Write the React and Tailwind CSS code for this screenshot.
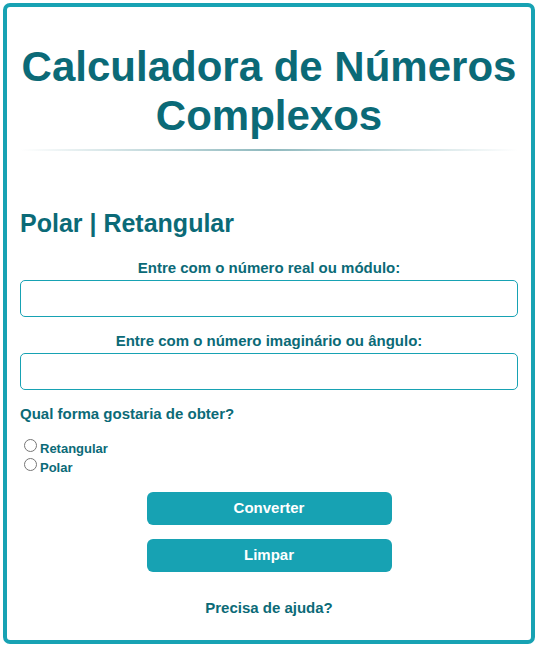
import { useState } from "react";

// Calculadora de números complexos (polar <-> retangular)
const App = () => {
  const [real, setReal] = useState("");
  const [imag, setImag] = useState("");
  const [forma, setForma] = useState("");

  const limpar = () => {
    setReal("");
    setImag("");
    setForma("");
  };

  return (
    <div className="pt-[3px] pl-[3px] font-['Liberation_Sans',Arial,sans-serif] text-[#0b6a77]">
      <div className="w-[532px] border-4 border-[#17a2b3] rounded-[7px] bg-white px-[13px] pt-[35px] pb-[23px] flex flex-col">
        <h1 className="text-[42px] leading-[49px] font-bold text-center">
          Calculadora de Números Complexos
        </h1>

        <div className="mt-[9px] h-[2px] bg-linear-to-r from-transparent via-[#8fb9be] to-transparent" />

        <h2 className="mt-[57px] text-[25px] leading-[30px] font-bold">Polar | Retangular</h2>

        <label className="mt-[21px] text-[15px] leading-[18px] font-bold text-center">
          Entre com o número real ou módulo:
        </label>
        <input
          type="text"
          value={real}
          onChange={(e) => setReal(e.target.value)}
          className="mt-[3px] h-[37px] w-full border border-[#17a2b3] rounded-[5px] bg-white px-2 outline-none"
        />

        <label className="mt-[15px] text-[15px] leading-[18px] font-bold text-center">
          Entre com o número imaginário ou ângulo:
        </label>
        <input
          type="text"
          value={imag}
          onChange={(e) => setImag(e.target.value)}
          className="mt-[3px] h-[37px] w-full border border-[#17a2b3] rounded-[5px] bg-white px-2 outline-none"
        />

        <p className="mt-[15px] text-[15px] leading-[18px] font-bold">Qual forma gostaria de obter?</p>

        <div className="mt-[16px] flex flex-col text-[13px] leading-[19px] font-bold">
          <label className="flex items-start h-[19px]">
            <input
              type="radio"
              name="forma"
              checked={forma === "ret"}
              onChange={() => setForma("ret")}
              className="ml-[4px] mr-[3px] w-[13px] h-[13px]"
            />
            Retangular
          </label>
          <label className="flex items-start h-[19px]">
            <input
              type="radio"
              name="forma"
              checked={forma === "pol"}
              onChange={() => setForma("pol")}
              className="ml-[4px] mr-[3px] w-[13px] h-[13px]"
            />
            Polar
          </label>
        </div>

        <button
          type="button"
          className="mt-[15px] mx-auto w-[245px] h-[33px] rounded-[6px] bg-[#17a2b3] text-white text-[15px] font-bold"
        >
          Converter
        </button>
        <button
          type="button"
          onClick={limpar}
          className="mt-[14px] mx-auto w-[245px] h-[33px] rounded-[6px] bg-[#17a2b3] text-white text-[15px] font-bold"
        >
          Limpar
        </button>

        <p className="mt-[27px] text-[15px] leading-[18px] font-bold text-center">Precisa de ajuda?</p>
      </div>
    </div>
  );
};

export default App;
